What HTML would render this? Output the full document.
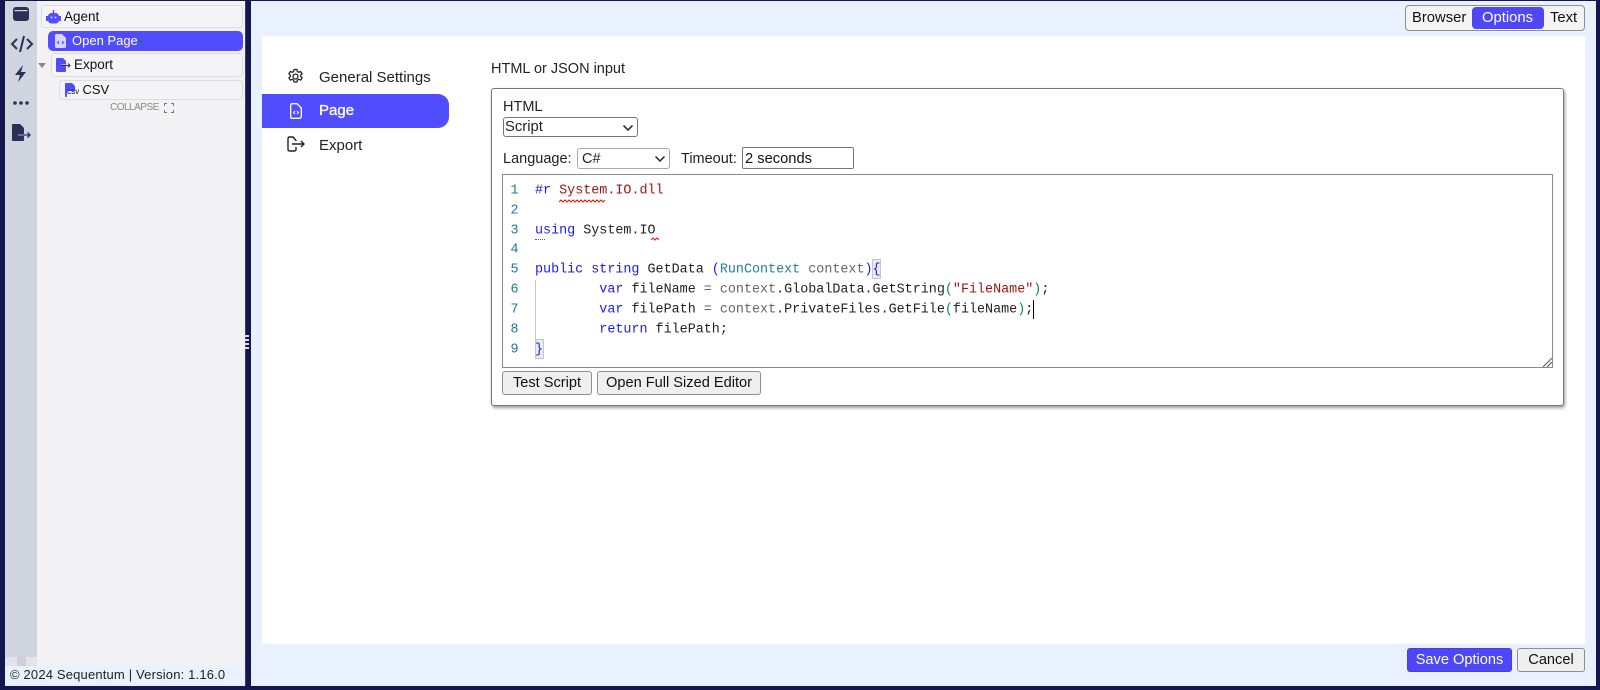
<!DOCTYPE html>
<html><head><meta charset="utf-8">
<style>
html,body{margin:0;padding:0;width:1600px;height:690px;overflow:hidden;background:#14174f;font-family:"Liberation Sans",sans-serif;color:#111}
.a{position:absolute;box-sizing:border-box;white-space:nowrap}
.t{position:absolute;white-space:nowrap;line-height:20px;transform:translateY(-10px)}
.node{position:absolute;box-sizing:border-box;background:#f4f4f7;border:1px solid #dcdce2;border-radius:4px}
.btn{position:absolute;box-sizing:border-box;background:#efefef;border:1px solid #8f8f8f;border-radius:3px;font-size:14.6px;text-align:center;line-height:23px;color:#111}
.code{position:absolute;left:535px;font:13.4px/20px "Liberation Mono",monospace;white-space:pre;color:#222;transform:translateY(-8.5px)}
.n{position:absolute;left:510.5px;font:13.4px/20px "Liberation Mono",monospace;color:#237893;transform:translateY(-8.5px)}
.k{color:#1c1cf0}.g{color:#666}.s{color:#a31515}.c{color:#267f99}
svg{position:absolute}
</style></head><body>

<div class="a" style="left:5px;top:1px;width:32px;height:685px;background:#cfd4de"></div>
<div class="a" style="left:37px;top:1px;width:208px;height:665px;background:#f2f2f5"></div>
<div class="a" style="left:5px;top:657px;width:32px;height:9px;background:#e2e4ea"></div>
<div class="a" style="left:17px;top:657px;width:9px;height:9px;background:#cfd0d6"></div>
<div class="a" style="left:5px;top:666px;width:240px;height:20px;background:#eaf1fe"></div>
<div class="t" style="left:10px;top:675px;font-size:13px;color:#222;letter-spacing:.17px">© 2024 Sequentum | Version: 1.16.0</div>

<svg style="left:12px;top:6px" width="18" height="16" viewBox="0 0 18 16"><rect x="1" y="1" width="16" height="14" rx="3" fill="#2b3156"/><rect x="2.500" y="4" width="13" height="1.200" fill="#cfd4de"/></svg>
<svg style="left:10px;top:34px" width="24" height="20" viewBox="0 0 24 20"><path d="M7 5L2 10l5 5M17 5l5 5-5 5M14 2l-4 16" fill="none" stroke="#2b3156" stroke-width="2"/></svg>
<svg style="left:13px;top:64px" width="16" height="19" viewBox="0 0 16 19"><path d="M10 1L2 11h5l-2 7 8-10H8z" fill="#2b3156"/></svg>
<svg style="left:12px;top:100px" width="18" height="6" viewBox="0 0 18 6"><circle cx="3" cy="3" r="1.800" fill="#2b3156"/><circle cx="9" cy="3" r="1.800" fill="#2b3156"/><circle cx="15" cy="3" r="1.800" fill="#2b3156"/></svg>
<svg style="left:11px;top:123px" width="21" height="19" viewBox="0 0 21 19"><path d="M2 1h7l4 4v6H7v2h6v4a1 1 0 0 1-1 1H2a1 1 0 0 1-1-1V2a1 1 0 0 1 1-1z" fill="#2b3156"/><path d="M7 12h12M16.500 9.500L19 12l-2.500 2.500" fill="none" stroke="#2b3156" stroke-width="1.300"/></svg>

<div class="node" style="left:41px;top:5px;width:202px;height:23px"></div>
<svg style="left:46px;top:10px" width="15" height="14" viewBox="0 0 15 14"><rect x="2" y="3" width="11" height="10.500" rx="3.500" fill="#524cff"/><rect x="0" y="6" width="2" height="5" fill="#524cff"/><rect x="13" y="6" width="2" height="5" fill="#524cff"/><rect x="6.800" y="0" width="1.400" height="3" fill="#524cff"/><circle cx="5.500" cy="7.500" r="1" fill="#cfd0ff"/><circle cx="9.500" cy="7.500" r="1" fill="#cfd0ff"/></svg>
<div class="t" style="left:64px;top:17px;font-size:13.500px">Agent</div>

<div class="a" style="left:48px;top:31px;width:195px;height:20px;background:#524cff;border-radius:5px"></div>
<svg style="left:55px;top:34px" width="11" height="14" viewBox="0 0 11 14"><path d="M1.500 0H7l4 4v8.500a1.500 1.500 0 0 1-1.500 1.500h-8A1.500 1.500 0 0 1 0 12.500v-11A1.500 1.500 0 0 1 1.500 0z" fill="#d8d6ff"/><path d="M4 7L2.500 8.500 4 10M7 7l1.500 1.500L7 10" stroke="#524cff" fill="none"/></svg>
<div class="t" style="left:72px;top:41px;font-size:13px;color:#fff">Open Page</div>
<div class="a" style="left:139px;top:40px;width:3px;height:3px;border-radius:50%;background:#0a8a3c"></div>

<svg style="left:38px;top:63px" width="9" height="6"><path d="M0 0h8L4 5z" fill="#8a8a8a"/></svg>
<div class="node" style="left:51px;top:53px;width:192px;height:24px"></div>
<svg style="left:56px;top:58px" width="15" height="14" viewBox="0 0 15 14"><path d="M1 0h6l3 3v3.500H5v1h5V13a1 1 0 0 1-1 1H1a1 1 0 0 1-1-1V1a1 1 0 0 1 1-1z" fill="#524cff"/><path d="M5 7.500h9M12 5.500l2 2-2 2" stroke="#2b3156" fill="none"/></svg>
<div class="t" style="left:74px;top:65px;font-size:13.500px">Export</div>

<div class="node" style="left:59px;top:80px;width:184px;height:20px"></div>
<svg style="left:65px;top:83px" width="14" height="14" viewBox="0 0 14 14"><path d="M1 0h6l3 3v5H2v6H1a1 1 0 0 1-1-1V1a1 1 0 0 1 1-1z" fill="#524cff"/></svg>
<div class="t" style="left:67px;top:93px;font-size:6px;font-weight:bold;color:#2b3156;letter-spacing:-.1px">CSV</div>
<div class="t" style="left:82.500px;top:90px;font-size:13px">CSV</div>
<div class="t" style="left:110px;top:108px;font-size:10px;color:#8a8a8a;letter-spacing:-.5px">COLLAPSE</div>
<svg style="left:164px;top:103px" width="10" height="10" viewBox="0 0 10 10"><path d="M.5 3V.5H3M7 .5h2.500V3M9.500 7v2.500H7M3 9.500H.500V7" fill="none" stroke="#777"/></svg>

<div class="a" style="left:251px;top:1px;width:1345px;height:685px;background:#eaf1fe"></div>
<div class="a" style="left:245px;top:1px;width:1px;height:685px;background:#3a3d6c"></div>
<div class="a" style="left:245px;top:335px;width:4px;height:2px;background:#ddd"></div>
<div class="a" style="left:245px;top:339px;width:4px;height:2px;background:#ddd"></div>
<div class="a" style="left:245px;top:343px;width:4px;height:2px;background:#ddd"></div>
<div class="a" style="left:245px;top:347px;width:4px;height:2px;background:#ddd"></div>

<div class="a" style="left:262px;top:36px;width:1323px;height:608px;background:#fff"></div>

<div class="a" style="left:1405px;top:5px;width:180px;height:26px;background:#f4f4f4;border:1px solid #8f8f8f;border-radius:4px"></div>
<div class="a" style="left:1472px;top:7px;width:72px;height:22px;background:#4f46f5;border-radius:4px"></div>
<div class="t" style="left:1412px;top:18px;font-size:14.800px">Browser</div>
<div class="t" style="left:1482px;top:18px;font-size:14.800px;color:#fff">Options</div>
<div class="t" style="left:1550px;top:18px;font-size:14.800px">Text</div>

<svg style="left:287px;top:68px" width="17" height="17" viewBox="0 0 24 24"><path d="M12 2l2 .3.700 2.700 2 1 2.600-1 2 3-2 2v2l2 2-2 3-2.600-1-2 1-.7 2.700-4 0-.7-2.700-2-1-2.600 1-2-3 2-2v-2l-2-2 2-3 2.600 1 2-1 .7-2.700z" fill="none" stroke="#222" stroke-width="1.800"/><circle cx="12" cy="12" r="3.500" fill="none" stroke="#222" stroke-width="1.800"/></svg>
<div class="t" style="left:319px;top:77.500px;font-size:15px;color:#222">General Settings</div>
<div class="a" style="left:262px;top:94px;width:187px;height:34px;background:#524cff;border-radius:0 11px 11px 0"></div>
<svg style="left:290px;top:103px" width="12" height="16" viewBox="0 0 12 16"><path d="M2 .7h5l4.300 4.300v8.500A1.800 1.800 0 0 1 9.500 15.300h-7.500A1.300 1.300 0 0 1 .7 14V2A1.300 1.300 0 0 1 2 .7z" fill="none" stroke="#fff" stroke-width="1.300"/><path d="M5 8L3.500 9.500 5 11M7 8l1.500 1.500L7 11" stroke="#fff" fill="none"/></svg>
<div class="t" style="left:319px;top:111px;font-size:15px;color:#fff;-webkit-text-stroke:.35px #fff">Page</div>
<svg style="left:287px;top:136px" width="18" height="16" viewBox="0 0 18 16"><path d="M9 5V4.500L6 1H2.500A1.500 1.500 0 0 0 1 2.500v11A1.500 1.500 0 0 0 2.500 15h5A1.500 1.500 0 0 0 9 13.500V11" fill="none" stroke="#222" stroke-width="1.400"/><path d="M5 8h12M14 5l3 3-3 3" fill="none" stroke="#222" stroke-width="1.400"/></svg>
<div class="t" style="left:319px;top:146px;font-size:15px;color:#222">Export</div>

<div class="t" style="left:491px;top:69px;font-size:14.500px;color:#222">HTML or JSON input</div>

<div class="a" style="left:491px;top:88px;width:1073px;height:318px;background:#fff;border:1px solid #777;border-radius:3px;box-shadow:1px 2px 3px rgba(0,0,0,.4)"></div>
<div class="t" style="left:503px;top:107px;font-size:14.500px;color:#222">HTML</div>
<div class="a" style="left:503px;top:117px;width:135px;height:20px;border:1px solid #767676;border-radius:3px;background:#fff"></div>
<div class="t" style="left:505px;top:127px;font-size:14.800px;color:#222">Script</div>
<svg style="left:622px;top:124px" width="12" height="8"><path d="M1.500 1.500L6 6l4.500-4.500" fill="none" stroke="#222" stroke-width="1.500"/></svg>
<div class="t" style="left:503px;top:159px;font-size:14.500px;color:#222">Language:</div>
<div class="a" style="left:577px;top:148px;width:93px;height:21px;border:1px solid #a8a8a8;border-radius:3px;background:#fff"></div>
<div class="t" style="left:582px;top:159px;font-size:14.500px;color:#222">C#</div>
<svg style="left:654px;top:155px" width="12" height="8"><path d="M1.500 1.500L6 6l4.500-4.500" fill="none" stroke="#222" stroke-width="1.500"/></svg>
<div class="t" style="left:681px;top:159px;font-size:14.500px;color:#222">Timeout:</div>
<div class="a" style="left:742px;top:147px;width:112px;height:22px;border:1px solid #767676;border-radius:2px;background:#fff"></div>
<div class="t" style="left:745px;top:159px;font-size:14.700px;color:#111">2 seconds</div>

<div class="a" style="left:502px;top:174px;width:1051px;height:194px;border:1px solid #8a8a8a;background:#fff"></div>
<svg style="left:1543px;top:358px" width="9" height="9"><path d="M0 9L9 0M4 9l5-5" stroke="#555" fill="none"/></svg>
<div class="a" style="left:535px;top:280px;width:1px;height:64px;background:#c8c8c8"></div>
<div class="a" style="left:872px;top:259px;width:9px;height:20px;background:#e8ecef;border:1px solid #c5c5c5"></div>
<div class="a" style="left:535px;top:339px;width:9px;height:20px;background:#e8ecef;border:1px solid #c5c5c5"></div>

<div class="n" style="top:190px">1</div><div class="n" style="top:210px">2</div><div class="n" style="top:230px">3</div><div class="n" style="top:249px">4</div><div class="n" style="top:269px">5</div><div class="n" style="top:289px">6</div><div class="n" style="top:309px">7</div><div class="n" style="top:329px">8</div><div class="n" style="top:349px">9</div>

<div class="code" style="top:190px"><span class="k">#r</span> <span class="s">System.IO.dll</span></div>
<svg style="left:559px;top:199px" width="48" height="4"><path d="M0 3l2-2 2 2 2-2 2 2 2-2 2 2 2-2 2 2 2-2 2 2 2-2 2 2 2-2 2 2 2-2 2 2 2-2 2 2 2-2 2 2 2-2 2 2 2-2" fill="none" stroke="#e51400"/></svg>
<div class="code" style="top:230px"><span class="k">using</span> System.IO</div>
<svg style="left:651px;top:237px" width="8" height="4"><path d="M0 3l2-2 2 2 2-2 2 2" fill="none" stroke="#e51400"/></svg>
<div class="a" style="left:535px;top:239px;width:10px;height:1px;border-top:1px dotted #555"></div>
<div class="code" style="top:269px"><span class="k">public string</span> GetData <span class="k">(</span><span class="c">RunContext</span> <span class="g">context</span><span class="k">)</span><span class="k">{</span></div>
<div class="code" style="top:289px">        <span class="k">var</span> fileName <span class="g">=</span> <span class="g">context</span>.GlobalData.GetString<span style="color:#0a8a5a">(</span><span class="s">"FileName"</span><span style="color:#0a8a5a">)</span>;</div>
<div class="code" style="top:309px">        <span class="k">var</span> filePath <span class="g">=</span> <span class="g">context</span>.PrivateFiles.GetFile<span style="color:#0a8a5a">(</span>fileName<span style="color:#0a8a5a">)</span>;</div>
<div class="a" style="left:1033px;top:300px;width:1px;height:19px;background:#000"></div>
<div class="code" style="top:329px">        <span class="k">return</span> filePath;</div>
<div class="code" style="top:349px"><span class="k">}</span></div>

<div class="btn" style="left:502px;top:371px;width:90px;height:24px">Test Script</div>
<div class="btn" style="left:597px;top:371px;width:164px;height:24px">Open Full Sized Editor</div>

<div class="btn" style="left:1407px;top:648px;width:105px;height:24px;background:#4f46f5;border-color:#4540d8;color:#fff">Save Options</div>
<div class="btn" style="left:1517px;top:648px;width:68px;height:24px">Cancel</div>

</body></html>
